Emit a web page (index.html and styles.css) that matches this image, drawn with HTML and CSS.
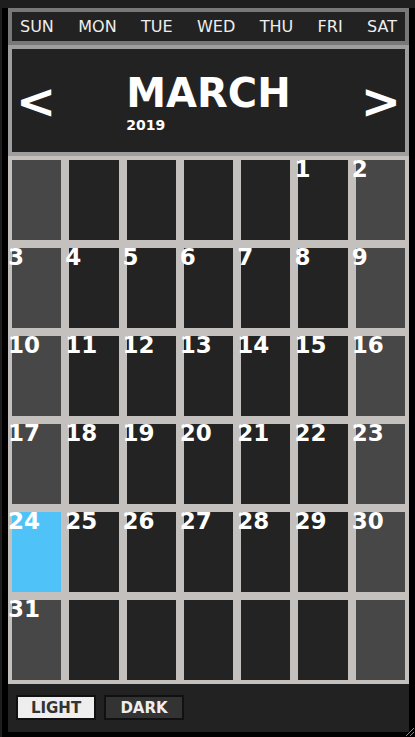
FILE: index.html
```html
<!DOCTYPE html>
<html lang="en">
<head>
  <meta charset="UTF-8">
  <meta name="viewport" content="width=device-width, initial-scale=1.0">
  <link rel="stylesheet" href="styles.css">
  <title>Calendar</title>
</head>
<body>
  <div class="frame">
    <div class="calendar">
      <div class="weekdays">
        <span>SUN</span>
        <span>MON</span>
        <span>TUE</span>
        <span>WED</span>
        <span>THU</span>
        <span>FRI</span>
        <span>SAT</span>
      </div>

      <div class="month-bar">
        <button class="arrow" type="button">&lt;</button>
        <div class="month-title">
          <div class="month-name">MARCH</div>
          <div class="month-year">2019</div>
        </div>
        <button class="arrow" type="button">&gt;</button>
      </div>

      <div class="days">
        <div class="day weekend"></div>
        <div class="day"></div>
        <div class="day"></div>
        <div class="day"></div>
        <div class="day"></div>
        <div class="day"><span>1</span></div>
        <div class="day weekend"><span>2</span></div>

        <div class="day weekend"><span>3</span></div>
        <div class="day"><span>4</span></div>
        <div class="day"><span>5</span></div>
        <div class="day"><span>6</span></div>
        <div class="day"><span>7</span></div>
        <div class="day"><span>8</span></div>
        <div class="day weekend"><span>9</span></div>

        <div class="day weekend"><span>10</span></div>
        <div class="day"><span>11</span></div>
        <div class="day"><span>12</span></div>
        <div class="day"><span>13</span></div>
        <div class="day"><span>14</span></div>
        <div class="day"><span>15</span></div>
        <div class="day weekend"><span>16</span></div>

        <div class="day weekend"><span>17</span></div>
        <div class="day"><span>18</span></div>
        <div class="day"><span>19</span></div>
        <div class="day"><span>20</span></div>
        <div class="day"><span>21</span></div>
        <div class="day"><span>22</span></div>
        <div class="day weekend"><span>23</span></div>

        <div class="day today"><span>24</span></div>
        <div class="day"><span>25</span></div>
        <div class="day"><span>26</span></div>
        <div class="day"><span>27</span></div>
        <div class="day"><span>28</span></div>
        <div class="day"><span>29</span></div>
        <div class="day weekend"><span>30</span></div>

        <div class="day weekend"><span>31</span></div>
        <div class="day"></div>
        <div class="day"></div>
        <div class="day"></div>
        <div class="day"></div>
        <div class="day"></div>
        <div class="day weekend"></div>
      </div>

      <div class="theme-bar">
        <button class="theme-btn light" type="button">LIGHT</button>
        <button class="theme-btn dark" type="button">DARK</button>
      </div>
    </div>

    <!-- resize handle in the corner -->
    <svg class="grip" width="12" height="12" viewBox="0 0 12 12">
      <line x1="11" y1="3" x2="3" y2="11" stroke="#8a8a8a" stroke-width="1"/>
      <line x1="11" y1="7" x2="7" y2="11" stroke="#8a8a8a" stroke-width="1"/>
    </svg>
  </div>
</body>
</html>
```

FILE: styles.css
```css
body {
  margin: 0;
  background-color: #1e1e1e;
  font-family: "DejaVu Sans", sans-serif;
  color: #eee;
}

.frame {
  position: relative;
  margin: 8px 0 0 2px;
  padding: 0 6px 5px 6px;
  width: 401px;
  height: 724px;
  background-color: #000;
  overflow: hidden;
}

.grip {
  position: absolute;
  right: 0;
  bottom: 0;
}

.calendar {
  display: flex;
  flex-direction: column;
}

/* weekday names */
.weekdays {
  display: flex;
  justify-content: space-between;
  padding: 0 8px;
  height: 29px;
  line-height: 29px;
  font-size: 16px;
  background-color: #222;
  border: 4px solid #787878;
}

/* month + arrows */
.month-bar {
  display: flex;
  align-items: center;
  justify-content: space-between;
  height: 103px;
  padding: 0 4px;
  background-color: #222;
  border: 4px solid #9e9e9e;
}

.arrow {
  background: none;
  border: none;
  padding: 0;
  color: #fff;
  font-family: "DejaVu Sans", sans-serif;
  font-size: 48px;
  font-weight: bold;
  line-height: 1;
  cursor: pointer;
}

.month-title {
  padding-top: 4px;
  font-weight: bold;
  color: #fff;
}

.month-name {
  font-size: 40px;
  line-height: 40px;
}

.month-year {
  margin-top: 4px;
  font-size: 14px;
  line-height: 16px;
}

/* day grid */
.days {
  display: grid;
  grid-template-columns: repeat(7, 1fr);
}

.day {
  height: 80px;
  border: 4px solid #c4c0bd;
  background-color: #232323;
}

.day.weekend {
  background-color: #474747;
}

.day.today {
  background-color: #4fc3f7;
}

.day span {
  display: block;
  margin: -4px 0 0 -4px;
  font-size: 23px;
  line-height: 26px;
  font-weight: bold;
  color: #fff;
}

/* theme switch */
.theme-bar {
  display: flex;
  gap: 8px;
  padding: 11px 8px 12px;
  background-color: #222;
}

.theme-btn {
  width: 80px;
  height: 25px;
  padding: 0;
  border: 2px solid #111;
  font-family: "DejaVu Sans", sans-serif;
  font-size: 15px;
  font-weight: bold;
  cursor: pointer;
}

.theme-btn.light {
  background-color: #eee;
  color: #333;
}

.theme-btn.dark {
  background-color: #333;
  color: #eee;
}
```
